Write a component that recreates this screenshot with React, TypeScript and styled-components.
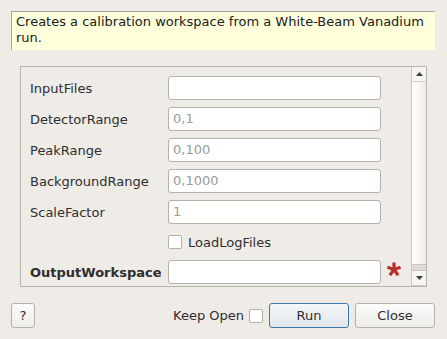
import React from "react";
import styled, { createGlobalStyle } from "styled-components";

const GlobalStyle = createGlobalStyle`
  html, body {
    margin: 0;
    padding: 0;
    background: #efebe7;
    font-family: "DejaVu Sans", sans-serif;
    font-size: 13px;
    color: #2e2e2e;
  }
`;

const Dialog = styled.div`
  width: 447px;
  height: 339px;
  box-sizing: border-box;
  padding: 11px 12px 0 11px;
  display: flex;
  flex-direction: column;
`;

const Description = styled.div`
  height: 39px;
  box-sizing: border-box;
  background: #ffffdc;
  border-top: 1px solid #a8a6a0;
  border-left: 1px solid #a8a6a0;
  padding: 2px 4px 0 4px;
  line-height: 16px;
  color: #202020;
`;

const Panel = styled.div`
  margin: 16px 8px 0 9px;
  height: 221px;
  box-sizing: border-box;
  border: 1px solid #b7b3ad;
  display: flex;
  overflow: hidden;
`;

const Form = styled.div`
  flex: 1;
  display: grid;
  grid-template-columns: 138px 213px;
  grid-template-rows: 24px 24px 24px 24px 24px 22px 24px;
  row-gap: 7px;
  padding: 9px 0 0 9px;
  align-items: center;
`;

const Label = styled.div<{ $bold?: boolean }>`
  font-weight: ${(p) => (p.$bold ? "bold" : "normal")};
  color: #2e2e2e;
`;

const Input = styled.div`
  height: 24px;
  box-sizing: border-box;
  border: 1px solid #b4b0aa;
  border-radius: 3px;
  background: #ffffff;
  padding: 0 4px;
  line-height: 22px;
  color: #9a9a9a;
`;

const FieldWrap = styled.div`
  position: relative;
`;

const Required = styled.svg`
  position: absolute;
  left: 219px;
  top: 2px;
`;

const CheckRow = styled.label`
  display: flex;
  align-items: center;
  gap: 6px;
`;

const Box = styled.span`
  width: 14px;
  height: 14px;
  box-sizing: border-box;
  border: 1px solid #b4b0aa;
  border-radius: 2px;
  background: #ffffff;
  display: inline-block;
`;

const ScrollBar = styled.div`
  width: 14px;
  display: flex;
  flex-direction: column;
  border-left: 1px solid #c9c5bf;
  background: #f4f2ef;
`;

const ArrowBtn = styled.div`
  height: 14px;
  display: flex;
  align-items: center;
  justify-content: center;
  background: #f6f5f3;
  border-bottom: 1px solid #d0ccc6;
`;

const Handle = styled.div`
  flex: 1;
  background: linear-gradient(to right, #ffffff, #eeece9);
  border-bottom: 1px solid #c9c5bf;
`;

const Track = styled.div`
  height: 5px;
  background: #dedad5;
  border-bottom: 1px solid #c9c5bf;
`;

const Footer = styled.div`
  display: flex;
  align-items: center;
  margin-top: 16px;
  height: 25px;
`;

const Button = styled.button<{ $primary?: boolean; $w: number; $gap?: number }>`
  width: ${(p) => p.$w}px;
  height: 25px;
  margin-left: ${(p) => p.$gap ?? 0}px;
  box-sizing: border-box;
  border: 1px solid ${(p) => (p.$primary ? "#3b78a8" : "#b4b0aa")};
  border-radius: 3px;
  background: ${(p) =>
    p.$primary
      ? "linear-gradient(#f4f6f8, #e2e7ec)"
      : "linear-gradient(#fbfbfa, #efedea)"};
  font-family: "DejaVu Sans", sans-serif;
  font-size: 13px;
  color: #2e2e2e;
  padding: 0;
`;

const Spacer = styled.div`
  flex: 1;
`;

const KeepOpen = styled.label`
  display: flex;
  align-items: center;
  gap: 5px;
  margin-right: 6px;
`;

const rows = [
  { name: "InputFiles", value: "" },
  { name: "DetectorRange", value: "0,1" },
  { name: "PeakRange", value: "0,100" },
  { name: "BackgroundRange", value: "0,1000" },
  { name: "ScaleFactor", value: "1" },
];

export default function App() {
  return (
    <>
      <GlobalStyle />
      <Dialog>
        <Description>
          Creates a calibration workspace from a White-Beam Vanadium run.
        </Description>
        <Panel>
          <Form>
            {rows.map((r) => (
              <React.Fragment key={r.name}>
                <Label>{r.name}</Label>
                <Input>{r.value}</Input>
              </React.Fragment>
            ))}
            <div />
            <CheckRow>
              <Box />
              LoadLogFiles
            </CheckRow>
            <Label $bold>OutputWorkspace</Label>
            <FieldWrap>
              <Input />
              <Required width="14" height="14" viewBox="0 0 14 14">
                <g stroke="#b8302a" strokeWidth="3.2" strokeLinecap="butt">
                  <line x1="7" y1="7.5" x2="7" y2="0.5" />
                  <line x1="7" y1="7.5" x2="13.6" y2="5.3" />
                  <line x1="7" y1="7.5" x2="11.1" y2="13.2" />
                  <line x1="7" y1="7.5" x2="2.9" y2="13.2" />
                  <line x1="7" y1="7.5" x2="0.4" y2="5.3" />
                </g>
              </Required>
            </FieldWrap>
          </Form>
          <ScrollBar>
            <ArrowBtn>
              <svg width="7" height="4" viewBox="0 0 7 4">
                <path d="M0 4 L3.5 0 L7 4 Z" fill="#3a3a3a" />
              </svg>
            </ArrowBtn>
            <Handle />
            <Track />
            <ArrowBtn>
              <svg width="7" height="4" viewBox="0 0 7 4">
                <path d="M0 0 L3.5 4 L7 0 Z" fill="#3a3a3a" />
              </svg>
            </ArrowBtn>
          </ScrollBar>
        </Panel>
        <Footer>
          <Button $w={24}>?</Button>
          <Spacer />
          <KeepOpen>
            Keep Open
            <Box />
          </KeepOpen>
          <Button $primary $w={80}>
            Run
          </Button>
          <Button $w={80} $gap={6}>
            Close
          </Button>
        </Footer>
      </Dialog>
    </>
  );
}
